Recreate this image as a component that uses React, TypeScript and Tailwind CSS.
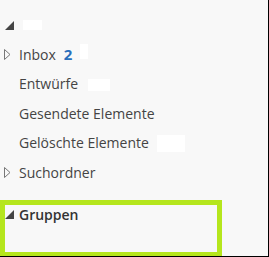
import React from 'react';

const font = { fontFamily: '"Open Sans", "Noto Sans", sans-serif' };

function Filled() {
  return (
    <svg width="9" height="9" viewBox="0 0 9 9" className="shrink-0">
      <polygon points="9,0 9,9 0,9" fill="#444444" />
    </svg>
  );
}

function Outline() {
  return (
    <svg width="7" height="11" viewBox="0 0 7 11" className="shrink-0">
      <polygon points="0.5,0.5 6,5.5 0.5,10.5" fill="none" stroke="#777777" strokeWidth="1" />
    </svg>
  );
}

const folders = [
  { name: 'Inbox', caret: true, count: '2', pad: 'w-[8px] h-[15px] ml-[8px] -mt-[6px]' },
  { name: 'Entwürfe', caret: false, pad: 'w-[22px] h-[12px] ml-[10px] mt-[2px]' },
  { name: 'Gesendete Elemente', caret: false },
  { name: 'Gelöschte Elemente', caret: false, pad: 'w-[28px] h-[17px] ml-[8px]' },
  { name: 'Suchordner', caret: true },
];

export default function App() {
  return (
    <div
      className="relative w-[269px] h-[257px] bg-[#f8f8f8] border-r border-b border-black overflow-hidden text-[#444444]"
      style={font}
    >
      {/* Account header */}
      <div className="flex items-center h-[10px] mt-[20px] pl-[5px] gap-[9px]">
        <Filled />
        <div className="w-[19px] h-[10px] bg-white" />
      </div>

      {/* Folders */}
      <div className="mt-[10px] flex flex-col">
        {folders.map((f) => (
          <div key={f.name} className="flex items-center h-[29.5px]">
            <div className="w-[19px] flex justify-center pr-[4px]">{f.caret && <Outline />}</div>
            <span className="text-[14px] leading-none">{f.name}</span>
            {f.count && <span className="ml-[8px] text-[15px] leading-none font-bold text-[#2a6ebb]">{f.count}</span>}
            {f.pad && <div className={`${f.pad} bg-white`} />}
          </div>
        ))}
      </div>

      {/* Highlighted group section */}
      <div className="absolute left-0 top-[200px] w-[222px] h-[57px] border-[5px] border-[#b5e61d]">
        <div className="flex items-center h-[18px] gap-[5px] pt-[1px]">
          <Filled />
          <span className="text-[14px] leading-none font-semibold text-[#333333]">Gruppen</span>
        </div>
      </div>
    </div>
  );
}
